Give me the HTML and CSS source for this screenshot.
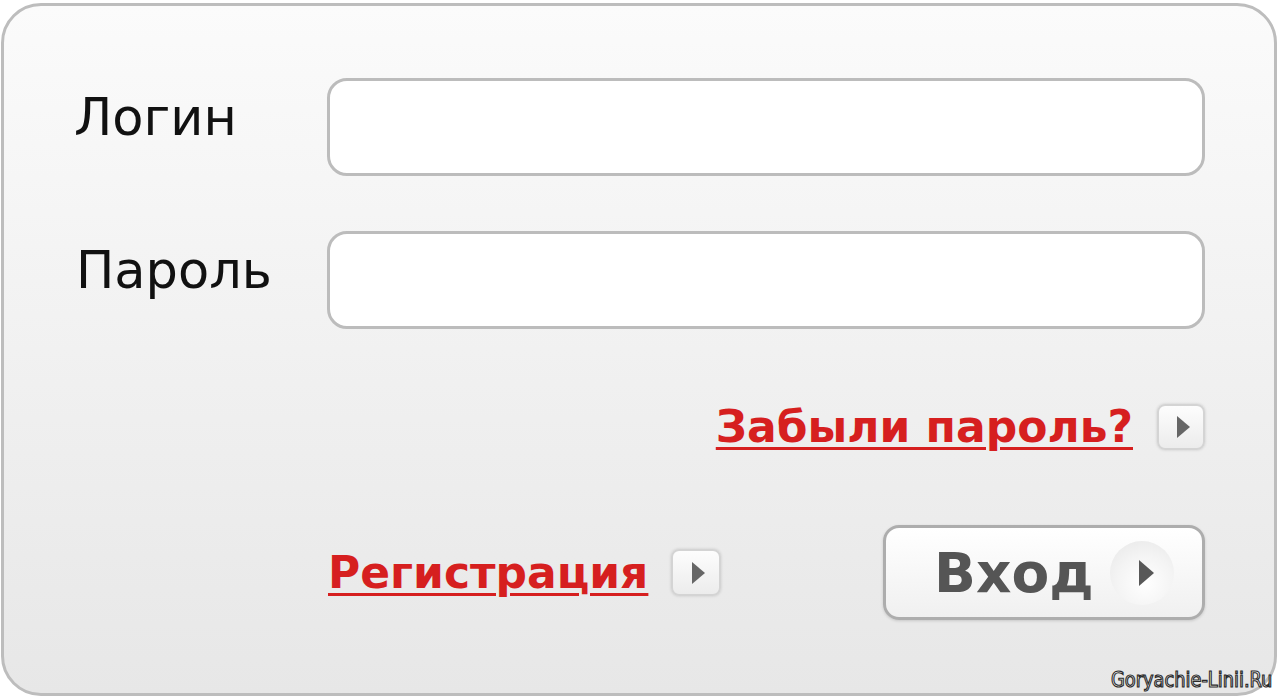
FILE: index.html
```html
<!DOCTYPE html>
<html lang="ru">
<head>
<meta charset="utf-8">
<title>Вход</title>
<link rel="stylesheet" href="styles.css">
</head>
<body>
<div class="panel">
  <div class="row">
    <label class="label">Логин</label>
    <div class="input"></div>
  </div>
  <div class="row row-second">
    <label class="label">Пароль</label>
    <div class="input"></div>
  </div>
  <div class="forgot">
    <a class="link" href="#">Забыли пароль?</a>
    <span class="arrow-box"><svg viewBox="0 0 14 22" width="14" height="22"><path d="M1 0 L14 11 L1 22 Z" fill="#666"/></svg></span>
  </div>
  <div class="bottom">
    <a class="link" href="#">Регистрация</a>
    <span class="arrow-box"><svg viewBox="0 0 14 22" width="14" height="22"><path d="M1 0 L14 11 L1 22 Z" fill="#666"/></svg></span>
    <div class="spacer"></div>
    <button class="btn">Вход<span class="btn-circle"><svg viewBox="0 0 16 26" width="16" height="26"><path d="M1 0 L16 13 L1 26 Z" fill="#585858"/></svg></span></button>
  </div>
  <div class="mark">Goryachie-Linii.Ru</div>
</div>
</body>
</html>
```
FILE: styles.css
```css
html, body {
  margin: 0;
  padding: 0;
  background: #ffffff;
}
body {
  width: 1280px;
  height: 698px;
  overflow: hidden;
  font-family: "DejaVu Sans", Verdana, sans-serif;
}
.panel {
  position: relative;
  box-sizing: border-box;
  margin: 3px 3px 0 1px;
  height: 693px;
  border: 3px solid #bdbdbd;
  border-radius: 40px;
  background: linear-gradient(#fbfbfb 0%, #f2f2f2 45%, #e7e7e7 100%);
  padding: 72px 69px 0 71px;
}
.row {
  display: flex;
  align-items: flex-start;
}
.row-second {
  margin-top: 55px;
}
.label {
  width: 253px;
  font-size: 51px;
  line-height: 60px;
  color: #111;
  padding-top: 10px;
  margin-left: -1px;
}
.row-second .label {
  padding-left: 2px;
  width: 251px;
}
.input {
  flex: 1;
  box-sizing: border-box;
  height: 98px;
  border: 3px solid #bcbcbc;
  border-radius: 20px;
  background: #fff;
}
.forgot {
  display: flex;
  justify-content: flex-end;
  align-items: center;
  margin-top: 75px;
  height: 46px;
}
.link {
  font-weight: bold;
  font-size: 44px;
  color: #d61f1f;
  text-decoration: underline;
  text-decoration-thickness: 3px;
  text-underline-offset: 5px;
  line-height: 46px;
}
.forgot .link {
  margin-right: 24px;
}
.arrow-box {
  box-sizing: border-box;
  width: 48px;
  height: 46px;
  border: 2px solid #d4d4d4;
  border-radius: 8px;
  background: linear-gradient(#fdfdfd, #ececec);
  box-shadow: 0 0 3px rgba(0,0,0,0.15);
  display: flex;
  align-items: center;
  justify-content: center;
}
.arrow-box svg {
  margin-left: 4px;
}
.bottom {
  display: flex;
  align-items: center;
  margin-top: 75px;
  padding-left: 253px;
}
.bottom .link {
  margin-right: 23px;
}
.bottom .arrow-box {
  width: 50px;
  height: 47px;
}
.spacer {
  flex: 1;
}
.btn {
  box-sizing: border-box;
  width: 322px;
  height: 95px;
  border: 3px solid #adadad;
  border-radius: 16px;
  background: linear-gradient(#ffffff, #f0f0f0);
  box-shadow: 0 1px 3px rgba(0,0,0,0.15);
  font-family: "DejaVu Sans", Verdana, sans-serif;
  font-weight: bold;
  font-size: 55px;
  color: #555555;
  display: flex;
  align-items: center;
  padding: 0 0 0 48px;
  margin: 0;
}
.btn-circle {
  width: 64px;
  height: 64px;
  border-radius: 50%;
  background: radial-gradient(circle at 55% 65%, #ffffff 0%, #f4f4f4 50%, #e6e6e6 100%);
  margin-left: 16px;
  display: flex;
  align-items: center;
  justify-content: center;
}
.btn-circle svg {
  margin-left: 8px;
}
.mark {
  position: absolute;
  right: 2px;
  bottom: 1px;
  font-family: "DejaVu Sans", sans-serif;
  font-stretch: condensed;
  font-size: 22px;
  color: #fff;
  -webkit-text-stroke: 1.2px #2a2a2a;
  transform: scaleX(0.9);
  transform-origin: right bottom;
}
```
